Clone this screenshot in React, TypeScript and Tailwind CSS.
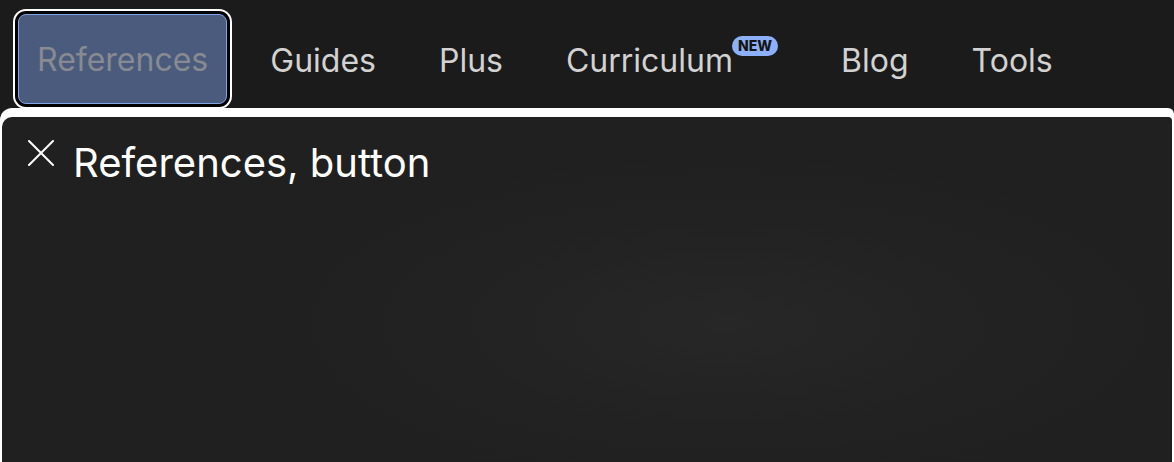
import React from "react";

const items = ["Guides", "Plus", "Curriculum", "Blog", "Tools"];

export default function App() {
  return (
    <div
      className="w-[1174px] h-[462px] overflow-hidden bg-[#1b1b1b] flex flex-col"
      style={{ fontFamily: "Inter, 'Noto Sans', sans-serif" }}
    >
      <nav className="h-[108px] shrink-0 flex items-start pl-[18px] pt-[14px] gap-[23px]">
        <button className="h-[90px] px-[18px] pt-[2px] rounded-[8px] border border-[#7ea4e6] bg-[#4a5b7d] text-[#878a90] text-[32px] shadow-[0_0_0_3px_#000,0_0_0_5px_#fff] relative z-10">
          References
        </button>
        {items.map((t) => (
          <div
            key={t}
            className="h-[90px] px-[20px] pt-[3px] flex items-center text-[32px] text-[#d2d2d2] relative"
          >
            <span>{t}</span>
            {t === "Curriculum" && (
              <span className="self-start mt-[19px] -ml-[1px] h-[20px] px-[6px] rounded-full bg-[#8db0fa] text-[#151515] text-[14px] font-extrabold leading-[20px]">
                NEW
              </span>
            )}
          </div>
        ))}
      </nav>
      <div className="flex-1 bg-white pt-[9px] pl-[2px] pr-[2px] rounded-tl-[12px] rounded-tr-[6px] relative z-20">
        <div className="h-full rounded-tl-[10px] rounded-tr-[4px] bg-[#202020] bg-[radial-gradient(ellipse_40%_50%_at_62%_60%,#272727_0%,#222222_60%,#202020_100%)] pl-[26px] pt-[23px] flex items-start gap-[19px]">
          <svg width="26" height="26" viewBox="0 0 26 26" className="shrink-0">
            <path d="M1 1 L25 25 M25 1 L1 25" stroke="#fff" strokeWidth="2" strokeLinecap="round" />
          </svg>
          <h1 className="text-[40px] leading-none text-white mt-[3px]">References, button</h1>
        </div>
      </div>
    </div>
  );
}
